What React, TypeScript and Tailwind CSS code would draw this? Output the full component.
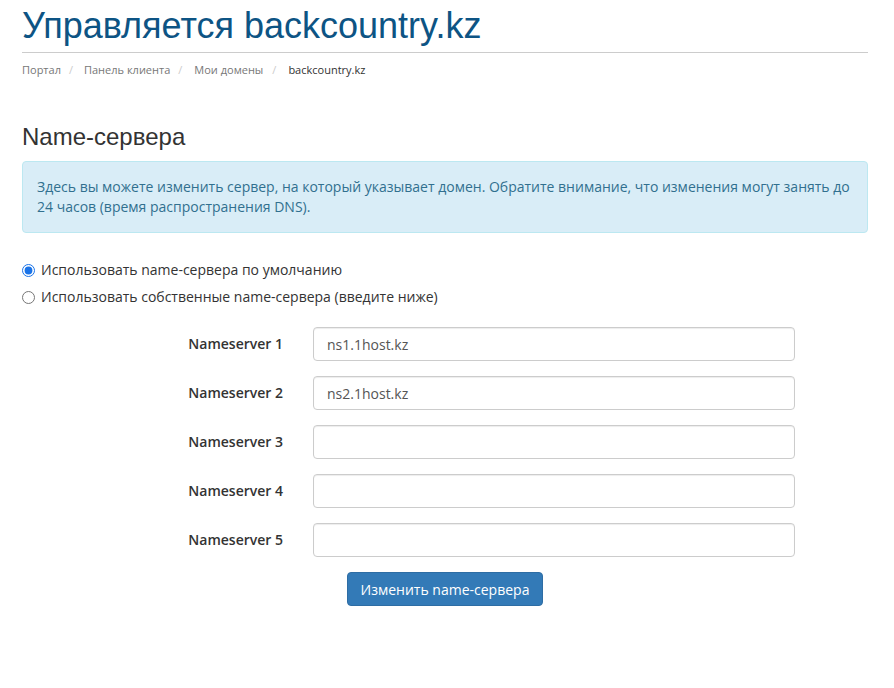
import { useState } from "react";

const servers = ["ns1.1host.kz", "ns2.1host.kz", "", "", ""];

export default function App() {
  const [mode, setMode] = useState<"default" | "custom">("default");
  const [values, setValues] = useState(servers);

  return (
    <div className="min-h-screen bg-white pl-[22px] pr-[26px] pt-[6px] font-['Open_Sans',sans-serif] text-[14px] text-[#333]">
      {/* Page header */}
      <h1 className="border-b border-[#ccc] pb-[6px] font-['Liberation_Sans',Arial,sans-serif] text-[36px] leading-[40px] text-[#0d5484]">
        Управляется backcountry.kz
      </h1>
      <nav className="mt-[9px] flex items-center text-[11px] leading-[15px] text-[#777]">
        <span>Портал</span>
        <span className="pl-[8px] pr-[11px] text-[#ccc]">/</span>
        <span>Панель клиента</span>
        <span className="pl-[8px] pr-[12px] text-[#ccc]">/</span>
        <span>Мои домены</span>
        <span className="pl-[9px] pr-[12px] text-[#ccc]">/</span>
        <span className="text-[#333]">backcountry.kz</span>
      </nav>

      <h2 className="mt-[46px] font-['Liberation_Sans',Arial,sans-serif] text-[24px] leading-[28px] text-[#333]">
        Name-сервера
      </h2>

      <div className="mt-[10px] rounded-[4px] border border-[#bce8f1] bg-[#d9edf7] py-[15px] pl-[14px] pr-[15px] leading-[20px] text-[#31708f]">
        Здесь вы можете изменить сервер, на который указывает домен. Обратите внимание, что изменения могут занять до 24 часов (время распространения DNS).
      </div>

      {/* Nameserver mode */}
      <div className="mt-[27px] flex flex-col gap-[7px]">
        <label className="flex items-center gap-[6px] leading-[20px]">
          <input
            type="radio"
            name="mode"
            checked={mode === "default"}
            onChange={() => setMode("default")}
            className="m-0 h-[13px] w-[13px] accent-[#1a73e8]"
          />
          Использовать name-сервера по умолчанию
        </label>
        <label className="flex items-center gap-[6px] leading-[20px]">
          <input
            type="radio"
            name="mode"
            checked={mode === "custom"}
            onChange={() => setMode("custom")}
            className="m-0 h-[13px] w-[13px] accent-[#1a73e8]"
          />
          Использовать собственные name-сервера (введите ниже)
        </label>
      </div>

      <form className="mt-[20px] flex flex-col gap-[15px]" onSubmit={(e) => e.preventDefault()}>
        {values.map((v, i) => (
          <div key={i} className="flex items-center">
            <label className="-mt-[2px] w-[261px] text-right font-semibold">Nameserver {i + 1}</label>
            <input
              type="text"
              value={v}
              onChange={(e) => {
                const next = [...values];
                next[i] = e.target.value;
                setValues(next);
              }}
              className="ml-[30px] h-[34px] w-[482px] rounded-[4px] border border-[#ccc] px-[13px] text-[14px] text-[#555] shadow-[inset_0_1px_1px_rgba(0,0,0,0.075)] outline-none"
            />
          </div>
        ))}
        <div className="flex justify-center">
          <button
            type="submit"
            className="h-[34px] rounded-[4px] border border-[#2e6da4] bg-[#337ab7] px-[13px] text-[14px] text-white"
          >
            Изменить name-сервера
          </button>
        </div>
      </form>
    </div>
  );
}
